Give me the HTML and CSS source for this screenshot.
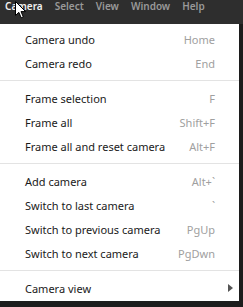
FILE: index.html
```html
<!DOCTYPE html>
<html lang="en">
<head>
    <meta charset="UTF-8">
    <title>Camera menu</title>
    <link rel="stylesheet" href="styles.css">
</head>
<body>
    <div class="menubar">
        <span class="top-item active">Camera</span>
        <span class="top-item">Select</span>
        <span class="top-item">View</span>
        <span class="top-item">Window</span>
        <span class="top-item">Help</span>
    </div>

    <svg class="cursor" width="12" height="18" viewBox="0 0 12 18">
        <path d="M0.5 0.5 L0.5 14.5 L3.8 11.3 L6.2 16.8 L8.3 15.9 L6 10.6 L10.6 10.6 Z" fill="#fff" stroke="#000" stroke-width="1"/>
    </svg>

    <div class="menu">
        <div class="row"><span>Camera undo</span><span class="key">Home</span></div>
        <div class="row"><span>Camera redo</span><span class="key">End</span></div>
        <div class="sep"></div>
        <div class="row"><span>Frame selection</span><span class="key">F</span></div>
        <div class="row"><span>Frame all</span><span class="key">Shift+F</span></div>
        <div class="row"><span>Frame all and reset camera</span><span class="key">Alt+F</span></div>
        <div class="sep"></div>
        <div class="row"><span>Add camera</span><span class="key">Alt+`</span></div>
        <div class="row"><span>Switch to last camera</span><span class="key">`</span></div>
        <div class="row"><span>Switch to previous camera</span><span class="key">PgUp</span></div>
        <div class="row"><span>Switch to next camera</span><span class="key">PgDwn</span></div>
        <div class="sep"></div>
        <div class="row sub"><span>Camera view</span><span class="arrow"></span></div>
    </div>
</body>
</html>
```

FILE: styles.css
```css
body {
    margin: 0;
    background: #1c1c1c;
    font-family: 'Noto Sans', sans-serif;
    position: relative;
    height: 307px;
    overflow: hidden;
}

.menubar {
    height: 24px;
    background: #2e2e2e;
    display: flex;
    font-size: 10px;
    font-weight: 600;
    line-height: 13px;
}

.top-item {
    color: #999;
    padding: 0 6px 0 5px;
    margin-right: 1px;
}

.top-item.active {
    color: #f0f0f0;
}

.cursor {
    position: absolute;
    top: 1px;
    left: 15px;
}

.menu {
    width: 239px;
    background: #fff;
    padding: 3px 0 1px;
    font-size: 11px;
    color: #1a1a1a;
}

.row {
    height: 24px;
    display: flex;
    align-items: center;
    justify-content: space-between;
    padding: 0 24px 0 25px;
}

.key {
    color: #a0a0a0;
}

.sep {
    height: 1px;
    background: #e3e3e3;
    margin: 5px 0;
}

.sub {
    padding-right: 6px;
}

.arrow {
    width: 0;
    height: 0;
    border-top: 4px solid transparent;
    border-bottom: 4px solid transparent;
    border-left: 5px solid #555;
}
```
